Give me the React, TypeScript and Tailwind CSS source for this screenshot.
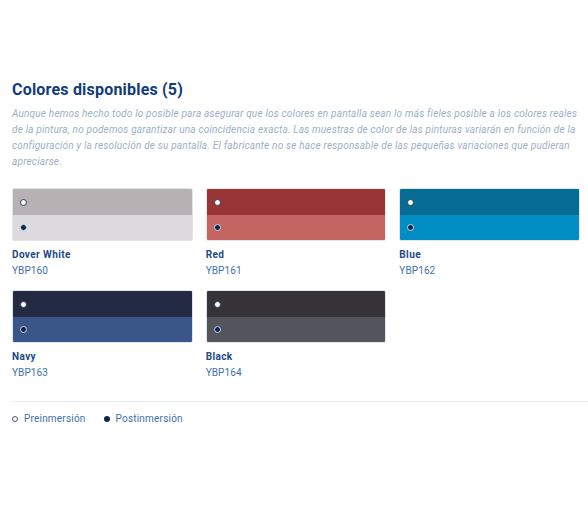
import React from "react";

const colores = [
  { nombre: "Dover White", codigo: "YBP160", pre: "#b8b1b4", post: "#dcdadc" },
  { nombre: "Red", codigo: "YBP161", pre: "#993534", post: "#c56663" },
  { nombre: "Blue", codigo: "YBP162", pre: "#076c94", post: "#008ec4" },
  { nombre: "Navy", codigo: "YBP163", pre: "#232a42", post: "#3a5689" },
  { nombre: "Black", codigo: "YBP164", pre: "#363438", post: "#54545c" },
];

function Punto({ relleno }: { relleno: boolean }) {
  return (
    <span
      className={`block w-[7px] h-[7px] rounded-full border ${
        relleno ? "bg-[#0b2550] border-[#cfd8e3]" : "bg-white border-[#2b3f5c]"
      }`}
    />
  );
}

export default function App() {
  return (
    <div
      className="w-[588px] h-[506px] bg-white pl-[12px] pt-[80px]"
      style={{ fontFamily: "Roboto, 'Liberation Sans', sans-serif" }}
    >
      <h2 className="text-[16px] leading-[20px] font-bold text-[#123b7a] tracking-[0.2px]">
        Colores disponibles (5)
      </h2>
      <p className="mt-[6px] text-[10px] leading-[16px] italic text-[#9cb0c6] tracking-[0.2px]">
        Aunque hemos hecho todo lo posible para asegurar que los colores en
        pantalla sean lo más fieles posible a los colores reales de la pintura,
        no podemos garantizar una coincidencia exacta. Las muestras de color de
        las pinturas variarán en función de la configuración y la resolución de
        su pantalla. El fabricante no se hace responsable de las pequeñas
        variaciones que pudieran apreciarse.
      </p>

      <div className="mt-[18px] grid grid-cols-3 w-[568px] gap-x-[13px] gap-y-[12px]">
        {colores.map((c) => (
          <div key={c.codigo}>
            <div className="rounded-[2px] overflow-hidden border border-[#dfe6ee]">
              <div
                className="h-[26px] flex items-center pl-[7px]"
                style={{ backgroundColor: c.pre }}
              >
                <Punto relleno={false} />
              </div>
              <div
                className="h-[25px] flex items-center pl-[7px]"
                style={{ backgroundColor: c.post }}
              >
                <Punto relleno={true} />
              </div>
            </div>
            <div className="mt-[7px] text-[10px] leading-[14px] font-bold text-[#22488a] tracking-[0.4px]">
              {c.nombre}
            </div>
            <div className="mt-[2px] text-[10px] leading-[14px] text-[#4170ad] tracking-[0.1px]">
              {c.codigo}
            </div>
          </div>
        ))}
      </div>

      <div className="mt-[21px] border-t border-[#e3eaf1]" />
      <div className="mt-[10px] flex items-center gap-[18px] text-[10px] leading-[14px] text-[#4170ad] tracking-[0.2px]">
        <span className="flex items-center gap-[6px]">
          <span className="block w-[6px] h-[6px] rounded-full border border-[#4a5a70] bg-white" />
          Preinmersión
        </span>
        <span className="flex items-center gap-[6px]">
          <span className="block w-[6px] h-[6px] rounded-full bg-[#0b2550]" />
          Postinmersión
        </span>
      </div>
    </div>
  );
}
